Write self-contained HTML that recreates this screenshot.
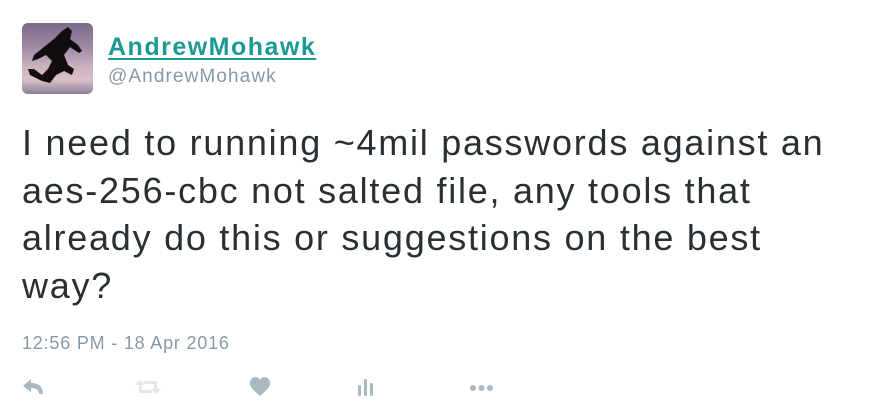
<!DOCTYPE html>
<html><head><meta charset="utf-8"><style>
body{margin:0;width:880px;height:419px;background:#fff;font-family:"Liberation Sans",sans-serif;position:relative;overflow:hidden}
.av{position:absolute;left:22px;top:23px;width:71px;height:71px;border-radius:6px;overflow:hidden;background:linear-gradient(180deg,#7a6a88 0%,#a08aa6 35%,#c9b0c0 60%,#d8c0c8 80%,#8a8098 100%)}
.name{position:absolute;left:108px;top:33px;font-size:25px;letter-spacing:1.5px;font-weight:bold;color:#1b9a94;text-decoration:underline;text-underline-offset:3px}
.handle{position:absolute;left:108px;top:66px;font-size:19px;letter-spacing:1.1px;color:#8899a6}
.txt{position:absolute;left:22px;top:119px;white-space:nowrap;font-size:36px;line-height:47.5px;color:#292f33;letter-spacing:1.75px}
.ts{position:absolute;left:22px;top:333px;font-size:18px;letter-spacing:0.8px;color:#8899a6}
svg{position:absolute}
</style></head><body>
<div class="av"><svg width="71" height="71" viewBox="0 0 71 71" style="position:static">
<path d="M40 8 L46 4 L50 8 L48 16 L56 22 L60 28 L57 30 L48 24 L42 32 L46 42 L52 46 L50 52 L42 48 L34 52 L28 60 L20 58 L8 52 L6 46 L12 46 L20 52 L26 46 L30 38 L24 32 L16 36 L10 38 L12 32 L22 24 L32 16 Z" fill="#120c10"/></svg></div>
<div class="name">AndrewMohawk</div>
<div class="handle">@AndrewMohawk</div>
<div class="txt">I need to running ~4mil passwords against an<br>aes-256-cbc not salted file, any tools that<br>already do this or suggestions on the best<br>way?</div>
<div class="ts">12:56 PM - 18 Apr 2016</div>
<svg style="left:22px;top:378px" width="24" height="18" viewBox="0 0 24 18"><path d="M1 8 L9 1 L9 5 C16 5 21 8 21 16 L17 16 C17 12 14 10 9 10 L9 14 Z" fill="#aab8c2"/></svg>
<svg style="left:133px;top:378px" width="30" height="18" viewBox="0 0 30 18"><path d="M2 7 L7 2 L12 7 L9 7 L9 12 L18 12 L20 15 L6 15 L6 7 Z M28 11 L23 16 L18 11 L21 11 L21 6 L12 6 L10 3 L24 3 L24 11 Z" fill="#e1e8ed"/></svg>
<svg style="left:249px;top:377px" width="22" height="20" viewBox="0 0 22 20"><path d="M11 19 C4 13 1 10 1 6 C1 2 4 0 6.5 0 C9 0 10.5 2 11 3 C11.5 2 13 0 15.5 0 C18 0 21 2 21 6 C21 10 18 13 11 19 Z" fill="#aab8c2"/></svg>
<svg style="left:356px;top:377px" width="18" height="20" viewBox="0 0 18 20"><rect x="2" y="8" width="3" height="11" rx="1.5" fill="#aab8c2"/><rect x="8" y="2" width="3" height="17" rx="1.5" fill="#aab8c2"/><rect x="14" y="6" width="3" height="13" rx="1.5" fill="#aab8c2"/></svg>
<svg style="left:469px;top:383px" width="30" height="10" viewBox="0 0 30 10"><circle cx="4" cy="5" r="3" fill="#aab8c2"/><circle cx="12.5" cy="5" r="3" fill="#aab8c2"/><circle cx="21" cy="5" r="3" fill="#aab8c2"/></svg>
</body></html>
